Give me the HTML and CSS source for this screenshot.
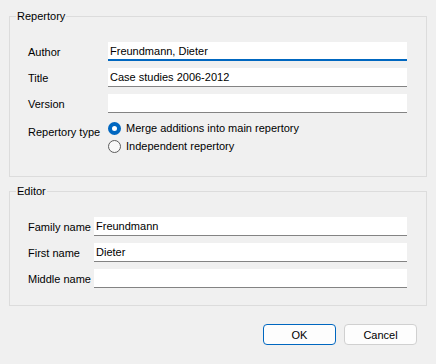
FILE: index.html
```html
<!DOCTYPE html>
<html lang="en">
<head>
    <meta charset="UTF-8">
    <title>Repertory properties</title>
    <link rel="stylesheet" href="styles.css">
</head>
<body>

<fieldset class="group">
    <legend>Repertory</legend>
    <div class="form form-wide">
        <label class="label">Author</label>
        <input class="field focused" type="text" value="Freundmann, Dieter">

        <label class="label">Title</label>
        <input class="field" type="text" value="Case studies 2006-2012">

        <label class="label">Version</label>
        <input class="field" type="text" value="">

        <span class="label label-top">Repertory type</span>
        <div class="radios">
            <label class="radio-row"><span class="radio checked"></span>Merge additions into main repertory</label>
            <label class="radio-row"><span class="radio"></span>Independent repertory</label>
        </div>
    </div>
</fieldset>

<fieldset class="group editor">
    <legend>Editor</legend>
    <div class="form form-narrow">
        <label class="label">Family name</label>
        <input class="field" type="text" value="Freundmann">

        <label class="label">First name</label>
        <input class="field" type="text" value="Dieter">

        <label class="label">Middle name</label>
        <input class="field" type="text" value="">
    </div>
</fieldset>

<div class="buttons">
    <button class="btn default">OK</button>
    <button class="btn">Cancel</button>
</div>

</body>
</html>
```

FILE: styles.css
```css
* {
    box-sizing: border-box;
}

body {
    margin: 0;
    padding: 8px 9px 0 9px;
    background: #f0f0f0;
    font-family: 'Liberation Sans', Arial, sans-serif;
    font-size: 11px;
    color: #000;
}

.group {
    margin: 0;
    border: 1px solid #dcdcdc;
    padding: 18px 19px 21px 18px;
}

.group legend {
    margin-left: -12px;
    padding: 0 1px;
    line-height: 16px;
}

.editor {
    margin-top: 6px;
    padding-bottom: 17px;
}

.form {
    display: grid;
    row-gap: 7px;
    align-items: center;
}

.form-wide {
    grid-template-columns: 80px 1fr;
}

.form-narrow {
    grid-template-columns: 66px 1fr;
}

.label {
    line-height: 16px;
    white-space: nowrap;
}

.label-top {
    align-self: start;
    padding-top: 4px;
}

.field {
    height: 19px;
    margin: 0;
    padding: 0 2px;
    border: none;
    border-bottom: 1px solid #838383;
    background: #fff;
    font-family: inherit;
    font-size: 11px;
    color: #000;
    outline: none;
}

.field.focused {
    border-bottom: 2px solid #0067c0;
}

.radios {
    display: flex;
    flex-direction: column;
    margin-top: -1px;
}

.radio-row {
    display: flex;
    align-items: center;
    height: 18px;
    gap: 5px;
    white-space: nowrap;
}

.radio {
    flex: none;
    width: 13px;
    height: 13px;
    border-radius: 50%;
    border: 1px solid #5c5c5c;
    background: #f8f8f8;
}

.radio.checked {
    border: 4px solid #0067c0;
    background: #fff;
}

.buttons {
    display: flex;
    justify-content: flex-end;
    gap: 8px;
    margin-top: 18px;
    padding-right: 10px;
}

.btn {
    width: 73px;
    height: 21px;
    padding: 0;
    border: 1px solid #d0d0d0;
    border-radius: 4px;
    background: #fdfdfd;
    font-family: inherit;
    font-size: 11px;
    color: #000;
}

.btn.default {
    border: 1px solid #0067c0;
}
```
